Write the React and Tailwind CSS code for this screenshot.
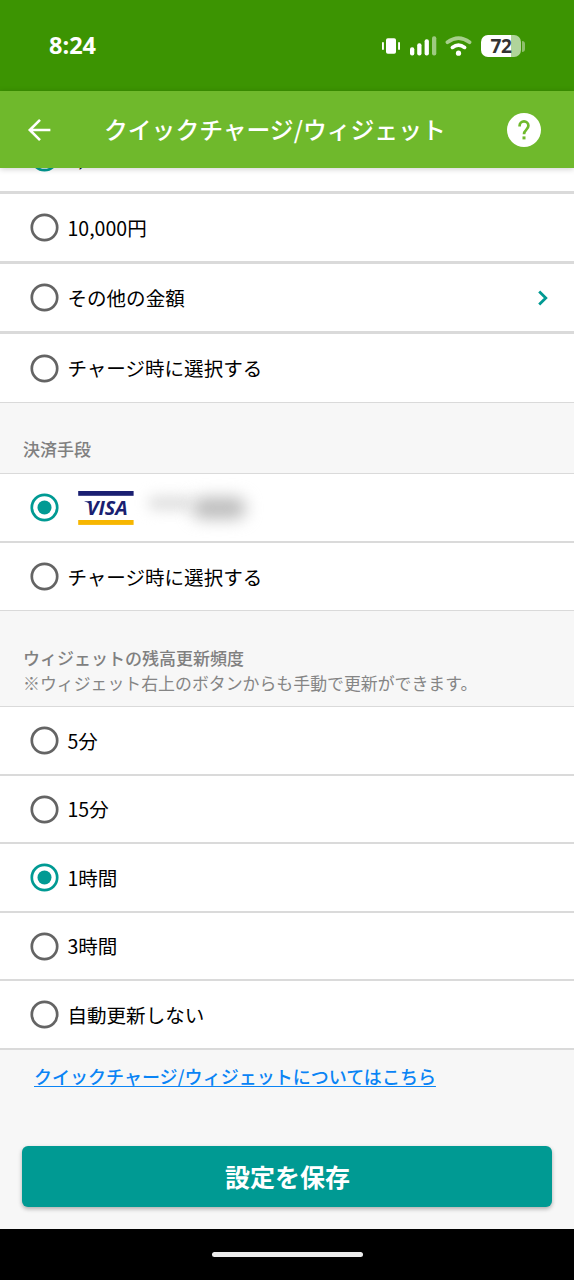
import { useState } from "react";

const amounts = [
  { id: "5000", label: "5,000円" },
  { id: "10000", label: "10,000円" },
  { id: "other", label: "その他の金額", arrow: true },
  { id: "later", label: "チャージ時に選択する", last: true },
];

const intervals = [
  { id: "5m", label: "5分", height: "h-[69px]" },
  { id: "15m", label: "15分", height: "h-[68px]" },
  { id: "1h", label: "1時間", height: "h-[69px]" },
  { id: "3h", label: "3時間", height: "h-[68px]" },
  { id: "off", label: "自動更新しない", height: "h-[69px]" },
];

const StatusBar = () => (
  <div className="flex h-[91px] items-center justify-between bg-[#3c9402] pt-px pr-[49px] pl-[49px]">
    <span className="font-['Open_Sans',sans-serif] text-[23.5px] leading-none font-bold text-white">
      8:24
    </span>
    <div className="flex items-center">
      {/* vibrate */}
      <svg className="mr-[9px]" width="18" height="16" viewBox="0 0 18 16" fill="#fff">
        <rect x="4" y="0.3" width="10" height="15.4" rx="1.8" />
        <rect x="0" y="4" width="1.9" height="8" rx="0.9" />
        <rect x="16.1" y="4" width="1.9" height="8" rx="0.9" />
      </svg>
      {/* signal */}
      <svg className="mr-[8px]" width="28" height="20" viewBox="0 0 28 20" fill="#fff">
        <rect x="1" y="11.3" width="4.3" height="8.2" rx="2" />
        <rect x="8.2" y="7.3" width="4.3" height="12.2" rx="2" />
        <rect x="15.6" y="3.3" width="4.3" height="16.2" rx="2" />
        <rect x="23" y="0.3" width="4.3" height="19.2" rx="2" opacity="0.5" />
      </svg>
      {/* wifi */}
      <svg className="mr-[9px]" width="27" height="20" viewBox="0 0 27 20" fill="none" stroke="#fff" strokeWidth="3.7" strokeLinecap="round">
        <path d="M2.4 6.2Q13.5-2 24.6 6.2" opacity="0.55" />
        <path d="M7.4 11.4Q13.5 7 19.6 11.4" />
        <circle cx="13.5" cy="17.2" r="2.6" fill="#fff" stroke="none" />
      </svg>
      {/* battery */}
      <div className="flex h-[22px] w-[40px] items-center rounded-[7px] bg-linear-to-r from-white from-75% to-[#b0d49a] to-75%">
        <span className="w-full text-center font-['Open_Sans',sans-serif] text-[19px] leading-[22px] font-bold tracking-[-0.3px] text-[#333]">
          72
        </span>
      </div>
      <div className="ml-px h-[11px] w-[3px] rounded-r-full bg-[#8ebf6c]"></div>
    </div>
  </div>
);

const Header = () => (
  <header className="relative z-10 flex h-[77px] items-center bg-[#6fb92c] pt-px pr-[33px] pl-[27px] text-white shadow-[0_1px_6px_rgba(0,0,0,0.2)]">
    <svg width="24" height="24" viewBox="0 0 24 24" fill="none" stroke="#fff" strokeWidth="2.6">
      <path d="M23.4 12H3M13 1.8 2.8 12 13 22.2" />
    </svg>
    <h1 className="-mt-[2px] ml-[53px] flex-1 text-[23.8px] leading-none font-medium whitespace-nowrap">
      クイックチャージ/ウィジェット
    </h1>
    <svg width="34" height="34" viewBox="0 0 34 34">
      <circle cx="17" cy="17" r="17" fill="#fff" />
      <path
        d="M12.6 13.4v-.6a4.4 4.4 0 0 1 8.8 0c0 3.8-4.4 3.9-4.4 8.5"
        fill="none"
        stroke="#6fb92c"
        strokeWidth="2.7"
      />
      <rect x="15.5" y="23.4" width="3" height="3" fill="#6fb92c" />
    </svg>
  </header>
);

const Radio = ({ checked }) => (
  <svg className="shrink-0" width="29" height="29" viewBox="0 0 29 29">
    <circle cx="14.5" cy="14.5" r="12.7" fill="none" stroke={checked ? "#009a93" : "#646464"} strokeWidth="2.7" />
    {checked && <circle cx="14.5" cy="14.5" r="7" fill="#009a93" />}
  </svg>
);

const OptionRow = ({ checked, onSelect, className, children }) => (
  <button
    type="button"
    onClick={onSelect}
    className={`flex w-full items-center border-[#dadada] bg-white pr-[24px] pl-[30px] text-left text-[19.55px] leading-none text-black ${className}`}
  >
    <Radio checked={checked} />
    {children}
  </button>
);

const VisaLogo = () => (
  <svg className="ml-[19px]" width="56" height="35" viewBox="0 0 56 35">
    <rect x="0.2" y="1" width="55.4" height="4.8" fill="#1a1f71" />
    <rect x="0.2" y="30" width="55.4" height="4.9" fill="#f7b600" />
    <path d="M6.4 11.2h6.2l1.4 6.4C12.8 14.4 9.8 12 6.4 11.5z" fill="#1a1f71" />
    <text
      x="8.8"
      y="25"
      textLength="41"
      lengthAdjust="spacingAndGlyphs"
      fontFamily="Open Sans, sans-serif"
      fontSize="19.2"
      fontWeight="700"
      fontStyle="italic"
      fill="#1a1f71"
    >
      VISA
    </text>
  </svg>
);

const App = () => {
  const [amount, setAmount] = useState("5000");
  const [payment, setPayment] = useState("visa");
  const [interval, setInterval] = useState("1h");

  return (
    <div className="flex h-[1280px] w-[574px] flex-col overflow-hidden bg-[#f7f7f7] font-['Noto_Sans_CJK_JP',sans-serif]">
      <StatusBar />
      <Header />

      <main className="flex-1 overflow-hidden">
        {/* the list is scrolled, first row goes under the header */}
        <section className="-mt-[44px]">
          {amounts.map((item) => (
            <OptionRow
              key={item.id}
              checked={amount === item.id}
              onSelect={() => setAmount(item.id)}
              className={item.last ? "h-[69px] border-b" : "h-[70px] border-b-3"}
            >
              <span className="ml-[8.5px] flex-1">{item.label}</span>
              {item.arrow && (
                <svg width="14" height="16" viewBox="0 0 14 16" fill="none" stroke="#009a93" strokeWidth="2.8">
                  <path d="M3.2 1.4 9.8 8l-6.6 6.6" />
                </svg>
              )}
            </OptionRow>
          ))}
        </section>

        <h2 className="h-[70px] pt-[37px] pl-[23px] text-[17px] leading-[18px] font-medium text-[#808080]">決済手段</h2>
        <section>
          <OptionRow
            checked={payment === "visa"}
            onSelect={() => setPayment("visa")}
            className="h-[70px] border-t border-b-2"
          >
            <VisaLogo />
            {/* masked card number */}
            <span className="ml-[14px] flex items-center">
              <span className="-mt-[9px] h-[14px] w-[44px] rounded-full bg-[#dedede] blur-[7px]"></span>
              <span className="h-[22px] w-[54px] rounded-full bg-[#bdbdbd] blur-[8px]"></span>
            </span>
          </OptionRow>
          <OptionRow
            checked={payment === "later"}
            onSelect={() => setPayment("later")}
            className="h-[68px] border-b"
          >
            <span className="ml-[8.5px]">チャージ時に選択する</span>
          </OptionRow>
        </section>

        <div className="h-[95px] pt-[34px] pl-[23px] text-[17px] leading-[25px] whitespace-nowrap text-[#858585]">
          <h2 className="font-medium text-[#808080]">ウィジェットの残高更新頻度</h2>
          <p className="text-[16.9px]">※ウィジェット右上のボタンからも手動で更新ができます。</p>
        </div>
        <section className="border-t border-[#dadada]">
          {intervals.map((item) => (
            <OptionRow
              key={item.id}
              checked={interval === item.id}
              onSelect={() => setInterval(item.id)}
              className={`border-b-2 ${item.height}`}
            >
              <span className="ml-[8.5px]">{item.label}</span>
            </OptionRow>
          ))}
        </section>

        <a
          href="#"
          className="mt-[16px] ml-[34px] inline-block text-[18.02px] leading-[20px] font-medium text-[#0a84f5] underline decoration-1 underline-offset-2"
        >
          クイックチャージ/ウィジェットについてはこちら
        </a>
      </main>

      <footer className="shrink-0">
        <div className="h-[83px] pr-[22px] pl-[22px]">
          <button
            type="button"
            className="h-[61px] w-full rounded-[6px] bg-[#009a93] pl-px text-[25px] leading-none font-bold text-white shadow-[0_2px_4px_rgba(0,0,0,0.3)]"
          >
            設定を保存
          </button>
        </div>
        <div className="flex h-[51px] justify-center bg-black pt-[23px]">
          <div className="h-[5px] w-[151px] rounded-full bg-[#ececec]"></div>
        </div>
      </footer>
    </div>
  );
};

export default App;
